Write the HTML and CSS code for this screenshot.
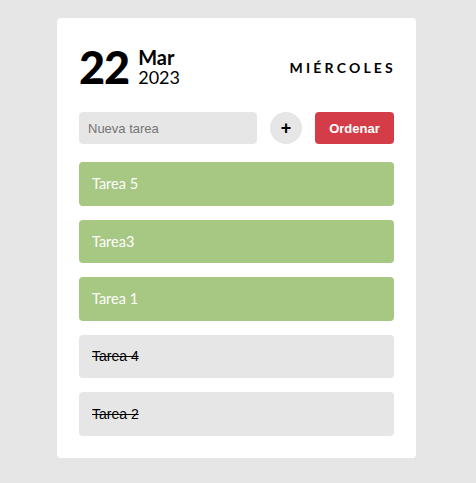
FILE: index.html
```html
<!DOCTYPE html>
<html lang="es">
<head>
<meta charset="utf-8">
<link rel="stylesheet" href="styles.css">
</head>
<body>
<div class="card">
  <div class="header">
    <div class="date">
      <span class="day">22</span>
      <div class="my">
        <span class="month">Mar</span>
        <span class="year">2023</span>
      </div>
    </div>
    <div class="weekday">MIÉRCOLES</div>
  </div>
  <div class="controls">
    <input class="new-task" type="text" placeholder="Nueva tarea">
    <button class="add">+</button>
    <button class="sort">Ordenar</button>
  </div>
  <div class="tasks">
    <div class="task">Tarea 5</div>
    <div class="task">Tarea3</div>
    <div class="task">Tarea 1</div>
    <div class="task done">Tarea 4</div>
    <div class="task done">Tarea 2</div>
  </div>
</div>
</body>
</html>
```
FILE: styles.css
```css
html, body { margin: 0; padding: 0; }
body {
  background: #e6e6e6;
  font-family: Lato, "Liberation Sans", sans-serif;
  width: 476px;
  height: 483px;
  display: flex;
  justify-content: center;
  align-items: flex-start;
}
.card {
  margin-top: 18px;
  margin-right: 3px;
  width: 315px;
  padding: 24px 22px 22.5px;
  background: #fff;
  border-radius: 4px;
}
.header {
  display: flex;
  justify-content: space-between;
  align-items: center;
  height: 50px;
}
.date { display: flex; align-items: center; }
.day {
  font-size: 45px;
  font-weight: 900;
  line-height: 1;
  letter-spacing: -1px;
}
.my {
  display: flex;
  flex-direction: column;
  margin-left: 9px;
  line-height: 20px;
}
.month { font-size: 20px; font-weight: 700; }
.year { font-size: 18px; font-weight: 400; }
.weekday {
  font-size: 14px;
  font-weight: 700;
  letter-spacing: 3.2px;
  margin-right: -2px;
}
.controls {
  display: flex;
  align-items: center;
  margin-top: 20px;
}
.new-task {
  width: 178px;
  height: 32px;
  box-sizing: border-box;
  border: none;
  border-radius: 4px;
  background: #e6e6e6;
  padding: 0 9px;
  font-family: "Liberation Sans", Arial, sans-serif;
  font-size: 13px;
  outline: none;
}
.new-task::placeholder { color: #757575; }
.add {
  width: 32px;
  height: 32px;
  margin-left: 13px;
  border: none;
  border-radius: 50%;
  background: #e6e6e6;
  font-family: "Liberation Sans", Arial, sans-serif;
  font-size: 18px;
  font-weight: 700;
  padding: 0;
  color: #000;
}
.sort {
  margin-left: auto;
  width: 79px;
  height: 32px;
  border: none;
  border-radius: 4px;
  background: #d43d48;
  color: #fff;
  font-family: "Liberation Sans", Arial, sans-serif;
  font-size: 13px;
  font-weight: 700;
  padding: 0;
}
.tasks {
  display: flex;
  flex-direction: column;
  gap: 14px;
  margin-top: 18px;
}
.task {
  height: 43.5px;
  box-sizing: border-box;
  display: flex;
  align-items: center;
  padding: 0 13px;
  border-radius: 4px;
  background: #a6c883;
  color: #fff;
  font-size: 14.5px;
}
.task.done {
  background: #e6e6e6;
  color: #000;
  font-family: "Liberation Sans", Arial, sans-serif;
  font-size: 14px;
  text-decoration: line-through;
}
```
